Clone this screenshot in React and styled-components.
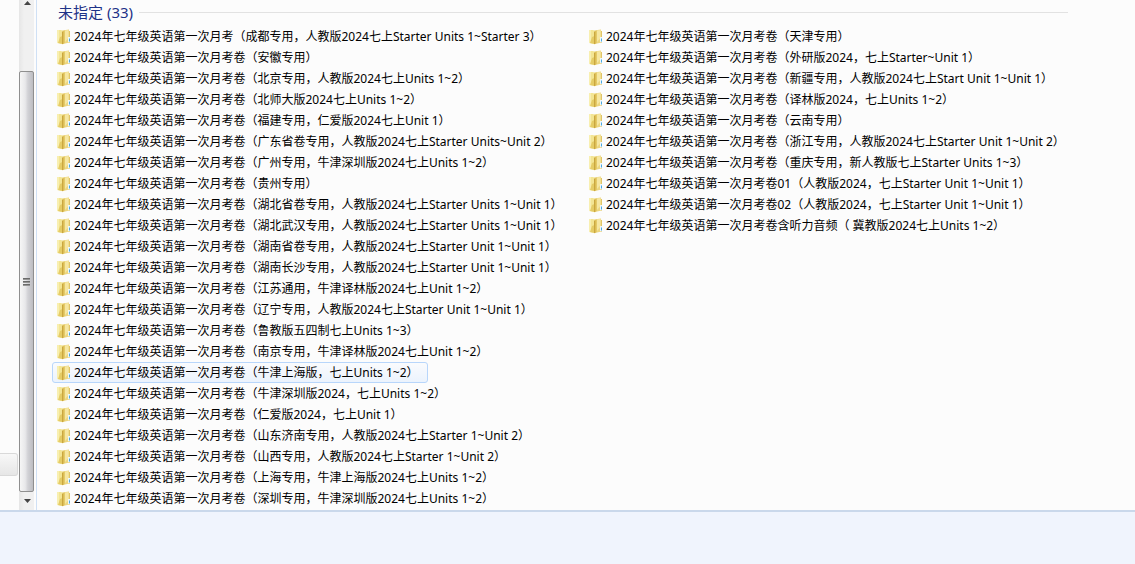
import React, { useState } from 'react'
import styled, { createGlobalStyle } from 'styled-components'

const GlobalStyle = createGlobalStyle`
  body {
    margin: 0;
    background: #f0f4fd;
    font-family: 'Noto Sans', 'Noto Sans CJK SC', sans-serif;
    color: #000;
  }
`

const Explorer = styled.div`
  display: flex;
  overflow: hidden;
  background: #fcfcfc;
  border-bottom: 2px solid #cad8eb;
`

const NavPane = styled.nav`
  display: flex;
  flex: none;
  flex-direction: column;
  justify-content: flex-end;
  width: 19px;
  padding-bottom: 34px;
  box-sizing: border-box;
`

const NavItem = styled.button`
  width: 18px;
  height: 23px;
  padding: 0;
  border: 1px solid #d9d9d9;
  border-left: 0;
  border-radius: 0 3px 3px 0;
  background: linear-gradient(#f8f8f8, #e6e6e6);
`

const ScrollBar = styled.div`
  display: flex;
  flex: none;
  flex-direction: column;
  width: 17px;
  background: linear-gradient(to right, #e6e6e6, #f0f0f0 30%, #f0f0f0 15px, #fcfcfc 15px);
  border-right: 1px solid #cfe0f5;
`

const ArrowButton = styled.button`
  display: flex;
  flex: none;
  align-items: center;
  justify-content: center;
  width: 16px;
  height: ${(props) => props.$height}px;
  padding: 0;
  border: 0;
  background: transparent;
`

const Track = styled.div`
  display: flex;
  flex: 1;
  flex-direction: column;
  padding-top: 66px;
`

const Thumb = styled.div`
  display: flex;
  flex: 1;
  flex-direction: column;
  align-items: center;
  justify-content: center;
  gap: 1px;
  width: 15px;
  box-sizing: border-box;
  border: 1px solid #8f8f8f;
  border-radius: 2px;
  background: linear-gradient(to right, #f6f6f6, #e8e8ea 40%, #d2d2d6 60%, #bcbdc2);
`

const Grip = styled.span`
  width: 7px;
  height: 2px;
  background: linear-gradient(#555, #aaa);
`

const FileList = styled.main`
  flex: 1;
  min-width: 0;
  padding: 0 16px 1px 15px;
`

const GroupHeader = styled.h2`
  display: flex;
  align-items: center;
  gap: 6px;
  max-width: 1010px;
  height: 24px;
  margin: 0 0 2px;
  padding-left: 6px;
  color: #1e3287;
  font-size: 15px;
  font-weight: 400;
  line-height: 24px;
  white-space: nowrap;

  &::after {
    content: '';
    flex: 1;
    height: 1px;
    background: #e2e2e2;
  }
`

const Items = styled.ul`
  display: grid;
  grid-template-rows: repeat(23, 21px);
  grid-auto-columns: 532px;
  grid-auto-flow: column;
  margin: 0;
  padding: 0;
  list-style: none;
`

const Item = styled.button`
  display: flex;
  align-items: center;
  gap: 3px;
  height: 21px;
  padding: 0 8px 0 4px;
  border: 1px solid ${(props) => (props.$active ? '#b8d6fb' : 'transparent')};
  border-radius: 3px;
  background: ${(props) => (props.$active ? 'linear-gradient(#fafbfd, #ebf3fd)' : 'none')};
  color: inherit;
  font-family: inherit;
  font-size: 12px;
  line-height: 19px;
  white-space: pre;
`

const FolderIcon = () => (
  <svg width="14" height="16" viewBox="0 0 14 16" aria-hidden="true">
    <path d="M5 1.500L12 .5l.5 13L6 15z" fill="#ecd67f" />
    <path d="M8 1.500L11.500 1v8L8 13z" fill="#f6e7a2" />
    <path d="M0 1h4.500l1 1.500V15L0 14z" fill="#f3e594" />
    <path d="M0 1h2v13H0z" fill="#f8efb0" />
    <path d="M3 8l2.500-1v8L1 14z" fill="#e5cc66" />
    <path d="M5 3l2.500-1.500v12.500L5.500 15.500z" fill="#dcbd55" />
    <path d="M5 3l1-.5V15H5z" fill="#c9a640" />
    <path d="M12 2h1v11.500h-1z" fill="#e0c468" />
    <path d="M11 8h2v5h-2z" fill="#eef7fb" />
    <path d="M12 9.500h1V12.500h-1z" fill="#4aa8e0" />
  </svg>
)

const folders = [
  '2024年七年级英语第一次月考（成都专用，人教版2024七上Starter Units 1~Starter 3）',
  '2024年七年级英语第一次月考卷（安徽专用）',
  '2024年七年级英语第一次月考卷（北京专用，人教版2024七上Units 1~2）',
  '2024年七年级英语第一次月考卷（北师大版2024七上Units 1~2）',
  '2024年七年级英语第一次月考卷（福建专用，仁爱版2024七上Unit 1）',
  '2024年七年级英语第一次月考卷（广东省卷专用，人教版2024七上Starter Units~Unit 2）',
  '2024年七年级英语第一次月考卷（广州专用，牛津深圳版2024七上Units 1~2）',
  '2024年七年级英语第一次月考卷（贵州专用）',
  '2024年七年级英语第一次月考卷（湖北省卷专用，人教版2024七上Starter Units 1~Unit 1）',
  '2024年七年级英语第一次月考卷（湖北武汉专用，人教版2024七上Starter Units 1~Unit 1）',
  '2024年七年级英语第一次月考卷（湖南省卷专用，人教版2024七上Starter Unit 1~Unit 1）',
  '2024年七年级英语第一次月考卷（湖南长沙专用，人教版2024七上Starter Unit 1~Unit 1）',
  '2024年七年级英语第一次月考卷（江苏通用，牛津译林版2024七上Unit 1~2）',
  '2024年七年级英语第一次月考卷（辽宁专用，人教版2024七上Starter Unit 1~Unit 1）',
  '2024年七年级英语第一次月考卷（鲁教版五四制七上Units 1~3）',
  '2024年七年级英语第一次月考卷（南京专用，牛津译林版2024七上Unit 1~2）',
  '2024年七年级英语第一次月考卷（牛津上海版，七上Units 1~2）',
  '2024年七年级英语第一次月考卷（牛津深圳版2024，七上Units 1~2）',
  '2024年七年级英语第一次月考卷（仁爱版2024，七上Unit 1）',
  '2024年七年级英语第一次月考卷（山东济南专用，人教版2024七上Starter 1~Unit 2）',
  '2024年七年级英语第一次月考卷（山西专用，人教版2024七上Starter 1~Unit 2）',
  '2024年七年级英语第一次月考卷（上海专用，牛津上海版2024七上Units 1~2）',
  '2024年七年级英语第一次月考卷（深圳专用，牛津深圳版2024七上Units 1~2）',
  '2024年七年级英语第一次月考卷（天津专用）',
  '2024年七年级英语第一次月考卷（外研版2024，七上Starter~Unit 1）',
  '2024年七年级英语第一次月考卷（新疆专用，人教版2024七上Start Unit 1~Unit 1）',
  '2024年七年级英语第一次月考卷（译林版2024，七上Units 1~2）',
  '2024年七年级英语第一次月考卷（云南专用）',
  '2024年七年级英语第一次月考卷（浙江专用，人教版2024七上Starter Unit 1~Unit 2）',
  '2024年七年级英语第一次月考卷（重庆专用，新人教版七上Starter Units 1~3）',
  '2024年七年级英语第一次月考卷01（人教版2024，七上Starter Unit 1~Unit 1）',
  '2024年七年级英语第一次月考卷02（人教版2024，七上Starter Unit 1~Unit 1）',
  '2024年七年级英语第一次月考卷含听力音频（ 冀教版2024七上Units 1~2）',
]

const App = () => {
  const [active, setActive] = useState(16)

  return (
    <>
      <GlobalStyle />
      <Explorer>
        <NavPane>
          <NavItem aria-label="文件夹" />
        </NavPane>
        <ScrollBar>
          <ArrowButton $height={5} aria-label="向上">
            <svg width="7" height="4" viewBox="0 0 7 4">
              <path d="M0 4L3.500 0L7 4z" fill="#444" />
            </svg>
          </ArrowButton>
          <Track>
            <Thumb>
              <Grip />
              <Grip />
              <Grip />
            </Thumb>
          </Track>
          <ArrowButton $height={18} aria-label="向下">
            <svg width="7" height="4" viewBox="0 0 7 4">
              <path d="M0 0h7L3.500 4z" fill="#444" />
            </svg>
          </ArrowButton>
        </ScrollBar>
        <FileList>
          <GroupHeader>未指定 (33)</GroupHeader>
          <Items>
            {folders.map((name, i) => (
              <li key={name}>
                <Item $active={i === active} onClick={() => setActive(i)}>
                  <FolderIcon />
                  {name}
                </Item>
              </li>
            ))}
          </Items>
        </FileList>
      </Explorer>
    </>
  )
}

export default App
